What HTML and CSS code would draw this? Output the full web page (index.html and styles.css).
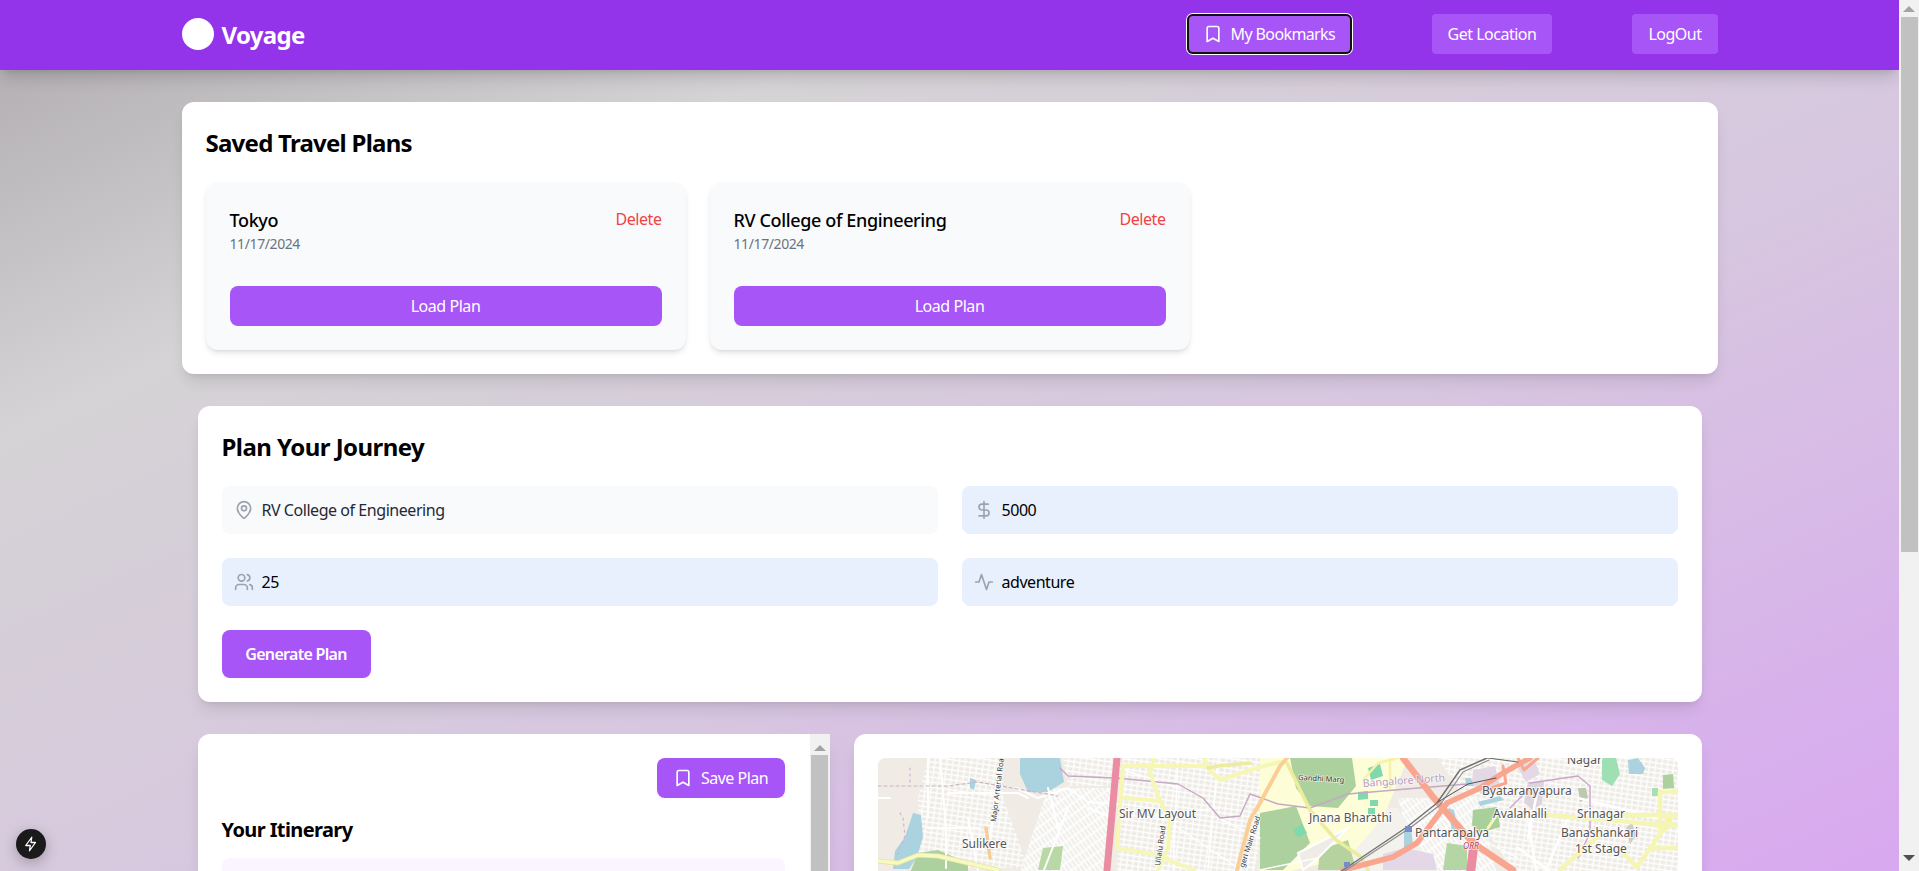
FILE: index.html
```html
<!DOCTYPE html>
<html lang="en">
<head>
<meta charset="utf-8">
<title>Voyage</title>
<link rel="stylesheet" href="styles.css">
</head>
<body>
<div class="window">
  <div class="page">
    <nav class="nav">
      <div class="nav-inner">
        <div class="brand"><span class="logo"></span><span class="brand-name">Voyage</span></div>
        <div class="nav-actions">
          <button class="nav-btn focused"><svg class="ic" viewBox="0 0 24 24"><path d="M19 21l-7-4-7 4V5a2 2 0 0 1 2-2h10a2 2 0 0 1 2 2z"/></svg>My Bookmarks</button>
          <button class="nav-btn">Get Location</button>
          <button class="nav-btn">LogOut</button>
        </div>
      </div>
    </nav>
    <main class="main">
      <section class="card saved">
        <h2 class="h-lg">Saved Travel Plans</h2>
        <div class="plans">
          <article class="plan">
            <div class="plan-head">
              <div><h3 class="plan-name">Tokyo</h3><p class="plan-date">11/17/2024</p></div>
              <span class="del">Delete</span>
            </div>
            <button class="load">Load Plan</button>
          </article>
          <article class="plan">
            <div class="plan-head">
              <div><h3 class="plan-name">RV College of Engineering</h3><p class="plan-date">11/17/2024</p></div>
              <span class="del">Delete</span>
            </div>
            <button class="load">Load Plan</button>
          </article>
        </div>
      </section>
      <div class="inner">
        <section class="card journey">
          <h2 class="h-lg h-journey">Plan Your Journey</h2>
          <div class="fields">
            <div class="field"><svg class="fi" viewBox="0 0 24 24"><path d="M20 10c0 5-5.500 10.200-7.400 11.800a1 1 0 0 1-1.200 0C9.500 20.200 4 15 4 10a8 8 0 0 1 16 0"/><circle cx="12" cy="10" r="3"/></svg><span class="val dim">RV College of Engineering</span></div>
            <div class="field auto"><svg class="fi" viewBox="0 0 24 24"><line x1="12" y1="2" x2="12" y2="22"/><path d="M17 5H9.500a3.500 3.500 0 0 0 0 7h5a3.500 3.500 0 0 1 0 7H6"/></svg><span class="val">5000</span></div>
            <div class="field auto"><svg class="fi" viewBox="0 0 24 24"><path d="M16 21v-2a4 4 0 0 0-4-4H6a4 4 0 0 0-4 4v2"/><circle cx="9" cy="7" r="4"/><path d="M22 21v-2a4 4 0 0 0-3-3.870"/><path d="M16 3.130a4 4 0 0 1 0 7.750"/></svg><span class="val">25</span></div>
            <div class="field auto"><svg class="fi" viewBox="0 0 24 24"><path d="M22 12h-4l-3 9L9 3l-3 9H2"/></svg><span class="val">adventure</span></div>
          </div>
          <button class="generate">Generate Plan</button>
        </section>
        <div class="split">
          <section class="itinerary">
            <div class="it-body">
              <div class="it-actions"><button class="save"><svg class="ic" viewBox="0 0 24 24"><path d="M19 21l-7-4-7 4V5a2 2 0 0 1 2-2h10a2 2 0 0 1 2 2z"/></svg>Save Plan</button></div>
              <h3 class="h-md">Your Itinerary</h3>
              <div class="it-box"></div>
            </div>
            <div class="sb sb-inner"><span class="arr up"></span><span class="thumb"></span></div>
          </section>
          <section class="map-card">
            <div class="map">
              <svg class="map-svg" viewBox="0 0 800 200" preserveAspectRatio="xMinYMin slice">
                <defs>
                  <pattern id="st1" width="6" height="5" patternUnits="userSpaceOnUse" patternTransform="rotate(8)">
                    <rect width="6" height="5" fill="#eeebe5"/>
                    <path d="M0 1.500H6M3 0V5" stroke="#fff" stroke-width="1.300"/>
                  </pattern>
                  <pattern id="st2" width="4" height="9" patternUnits="userSpaceOnUse" patternTransform="rotate(-35)">
                    <rect width="4" height="9" fill="#f1efeb"/>
                    <path d="M2 0V9M0 5H4" stroke="#fff" stroke-width="1.500"/>
                  </pattern>
                  <filter id="soft"><feGaussianBlur stdDeviation="0.350"/></filter>
                </defs>
                <g filter="url(#soft)">
                  <rect width="800" height="200" fill="#f0ece5"/>
                  <path d="M50 0H125V40L150 110H40V40Z" fill="url(#st1)"/>
                  <path d="M170 30H235L226 120H140Z" fill="url(#st2)"/>
                  <path d="M185 0H240L236 28H190Z" fill="url(#st1)"/>
                  <path d="M245 0H400L375 120H238Z" fill="url(#st1)"/>
                  <path d="M560 0H800V120H640Z" fill="url(#st1)"/>
                  <path d="M520 40H600L620 120H540Z" fill="url(#st2)"/>
                  <path d="M440 50H520L560 120H470Z" fill="#f4f2ec"/>
                  <path d="M382 0H530L505 60 470 100 382 120Z" fill="#fdfdd8"/>
                  <path d="M412 0H474L478 28 460 50 432 48 418 30Z" fill="#add19e"/>
                  <path d="M382 55L418 48 432 85 405 112H382Z" fill="#add19e"/>
                  <path d="M442 92L470 82 478 112H440Z" fill="#b5d29f"/>
                  <path d="M415 72l9-6 5 9-9 5Z" fill="#7fd9ad"/>
                  <path d="M480 34l10-1 0 8-10 1ZM492 42l8 0 0 6-8 0ZM490 50l7 0 0 7-7 0Z" fill="#7fd9ad"/>
                  <path d="M490 10l12-4 3 12-12 4Z" fill="#7fd9ad"/>
                  <path d="M420 95L470 70 440 100 425 112Z" fill="#eeece5" stroke="#fff" stroke-width="2"/>
                  <path d="M142 0H182L186 24 170 34 150 34 142 16Z" fill="#aad3df"/>
                  <path d="M92 20l6 2-2 10-4-2ZM35 55l8 2 2 22-6 20-8 12H15l2-18 10-14Z" fill="#aad3df"/>
                  <path d="M40 95L60 92 90 105 90 120H30Z" fill="#add19e"/>
                  <path d="M165 90L185 88 182 112 160 112Z" fill="#b8d9a6"/>
                  <path d="M569 85L589 88 589 112 565 112Z" fill="#b4d6a4"/>
                  <path d="M595 52l24-3 3 20-20 6-8-8Z" fill="#a9cf9a"/>
                  <path d="M595 12l22-4 6 24-20 4-9-12ZM640 10l16-8 6 14-14 8Z" fill="#e3d8e4"/>
                  <path d="M505 96l22-6 28 6 4 16h-54Z" fill="#e4d8e8"/>
                  <path d="M526 72l7-2 2 18-9 4Z" fill="#aad3df"/>
                  <path d="M570 50l6 2 4 20-6 2Z" fill="#aad3df"/>
                  <path d="M587 20l6 0 3 8-8 0Z" fill="#aad3df"/>
                  <path d="M600 44l22-6 4 4-24 6Z" fill="#aad3df"/>
                  <path d="M750 2l10-2 7 10-2 6-14 0Z" fill="#aad3df"/>
                  <path d="M724 0l14 0 4 16-8 12-10-6Z" fill="#9edfb4"/>
                  <path d="M785 17l10-1 1 14-11 1Z" fill="#add19e"/>
                  <path d="M774 30l6 0 1 8-7 0Z" fill="#a9dfb4"/>
                  <path d="M700 30l8 0 2 10-8 4Z" fill="#bdc9ae"/>
                  <path d="M650 24l16 0-2 22-10 6-8-8Z" fill="#ddd4de"/>
                  <path d="M748 70l6-6 4 14-6 8Z" fill="#cfcdc8"/>
                  <path d="M787 60l8-2-2 12-8 4Z" fill="#f7f4a8"/>
                  <g fill="none" stroke-linecap="round" stroke-linejoin="round">
                    <path d="M0 40H12M50 0V60M62 0L68 70V110M70 35H140L150 40M120 10L112 80M138 30L160 40 190 30 210 44 240 46M170 30L180 70M190 50L166 112M210 50L236 60M50 70H100M90 60L100 112" stroke="#fff" stroke-width="2"/>
                    <path d="M240 10L300 30M260 60L340 50M300 0L295 112M340 0L330 112M382 80L340 60M300 70L360 110M440 100L382 112" stroke="#fff" stroke-width="1.500"/>
                    <path d="M640 90L670 112M650 60L658 112M690 60L668 112M660 30L650 80M700 40L780 60" stroke="#fff" stroke-width="2.500"/>
                    <path d="M0 28H70L100 24 180 38" stroke="#c8b4c0" stroke-width="1.200" stroke-dasharray="3 3"/>
                    <path d="M22 55L25 60 27 78 18 100M32 10V24" stroke="#cdb4d2" stroke-width="1.200" stroke-dasharray="2 4"/>
                    <path d="M182 10L190 18 238 20 300 26 325 40 342 60 362 58 372 36 400 46 432 50 470 36 540 30 590 26" stroke="#c6a7c5" stroke-width="1.400"/>
                    <path d="M652 25L700 18 712 28 712 75 700 100M632 50L650 32" stroke="#c9a6ca" stroke-width="1.400"/>
                    <path d="M0 103L20 105 40 97 60 98 120 112" stroke="#e6e2a6" stroke-width="5"/>
                    <path d="M0 103L20 105 40 97 60 98 120 112" stroke="#f7fabf" stroke-width="3.500"/>
                    <path d="M245 8H328L342 22 382 9 402 4M245 8L239 90 275 96 316 112M246 40L282 43 292 60 290 90 280 112M276 0L272 15 282 43M326 0L330 8" stroke="#f7f7b5" stroke-width="4"/>
                    <path d="M409 5L432 52 458 82 482 98 490 112M330 10L340 8 372 5" stroke="#ecec9d" stroke-width="3.500"/>
                    <path d="M485 22L500 5 520 0M512 0V30" stroke="#f6f2a8" stroke-width="2.500"/>
                    <path d="M669 57L742 63 782 67H800M745 57H800M782 34V72M782 34H800M742 92L759 109M759 109L785 72M775 90H800M682 112L719 79" stroke="#f6f6b4" stroke-width="4.500"/>
                    <path d="M610 70L618 58" stroke="#f6f6b4" stroke-width="3"/>
                    <path d="M359 112L372 62 382 45 402 8 409 0" stroke="#f9cf97" stroke-width="4"/>
                    <path d="M239 0L229 112" stroke="#ea8ca2" stroke-width="7"/>
                    <path d="M596 85L592 120" stroke="#ea8ca2" stroke-width="9"/>
                    <path d="M525 0L555 39 595 85 635 112" stroke="#f8a68f" stroke-width="6.500"/>
                    <path d="M465 112L515 99 539 85 569 45 602 30 625 15 652 0" stroke="#f8a68f" stroke-width="5.500"/>
                    <path d="M625 8L628 25 608 32M640 0L646 12 660 0" stroke="#f8a68f" stroke-width="3"/>
                    <path d="M462 114L529 69 559 45 582 12 609 0" stroke="#6f6f6f" stroke-width="1.400"/>
                    <path d="M465 114L532 70 562 47 585 14 611 2" stroke="#8f8f8f" stroke-width="1.200"/>
                    <path d="M560 44L590 26 618 20" stroke="#555" stroke-width="1"/>
                    <path d="M610 0L640 4" stroke="#666" stroke-width="1.200"/>
                    <path d="M610 85L640 100" stroke="#fff" stroke-width="1.500" stroke-dasharray="3 2"/>
                    <path d="M108 70L112 100" stroke="#f6cd96" stroke-width="3.500" stroke-dasharray="4 3"/>
                  </g>
                  <path d="M527 68h7v6h-7z" fill="#7a8cc8"/>
                  <path d="M466 104h6v5h-6z" fill="#7a8cc8"/>
                </g>
                <g class="lbl">
                  <text x="84" y="90">Sulikere</text>
                  <text x="241" y="60">Sir MV Layout</text>
                  <text x="431" y="64">Jnana Bharathi</text>
                  <text x="537" y="79">Pantarapalya</text>
                  <text x="604" y="37">Byataranyapura</text>
                  <text x="615" y="60">Avalahalli</text>
                  <text x="699" y="60">Srinagar</text>
                  <text x="683" y="79">Banashankari</text>
                  <text x="697" y="95">1st Stage</text>
                  <text x="689" y="6">Nagar</text>
                </g>
                <g class="lbl-road">
                  <text x="420" y="22" transform="rotate(3 420 22)">Gandhi Marg</text>
                  <text transform="translate(118 64) rotate(-83)">Major Arterial Road</text>
                  <text transform="translate(282 108) rotate(-82)">Ullalu Road</text>
                  <text transform="translate(366 110) rotate(-72)">geri Main Road</text>
                </g>
                <text class="lbl-dist" x="485" y="29" transform="rotate(-4 485 29)">Bangalore North</text>
                <text class="lbl-orr" x="585" y="91">ORR</text>
              </svg>
            </div>
          </section>
        </div>
      </div>
    </main>
  </div>
  <div class="sb sb-page"><span class="arr up"></span><span class="thumb"></span><span class="arr down"></span></div>
</div>
<div class="badge"><svg viewBox="0 0 24 24"><path d="M13 3L5 14h6l-1 7 8-11h-6z"/></svg></div>
</body>
</html>
```
FILE: styles.css
```css
* { box-sizing: border-box; }
html, body { margin: 0; height: 871px; overflow: hidden; }
body { font-family: "Noto Sans", "Open Sans", sans-serif; font-size: 16px; color: #000; }
h2, h3, p { margin: 0; }
button { font: inherit; border: 0; cursor: pointer; }

.window { display: flex; height: 871px; }
.page {
  flex: 1; min-width: 0; height: 871px; overflow: hidden;
  background: linear-gradient(to bottom right, #aeaaae 0%, #d5d3d5 25%, #d7c6e0 60%, #d8a8f0 100%);
}
.sb { background: #f1f1f1; flex: 0 0 20px; width: 20px; display: flex; flex-direction: column; align-items: center; }
.sb-page { height: 871px; }
.thumb { display: block; width: 17px; background: #c1c1c1; }
.sb-page .thumb { height: 535px; margin-top: 5px; }
.sb-inner .thumb { flex: 1; margin-top: 4px; }
.sb-inner { padding-top: 5px; }
.arr { display: block; width: 0; height: 0; border-left: 6px solid transparent; border-right: 6px solid transparent; margin-top: 6px; }
.arr.up { border-bottom: 6px solid #a3a3a3; }
.arr.down { border-top: 6px solid #505050; margin-top: 303px; }

.nav { height: 70px; background: #9333ea; box-shadow: 0 10px 15px -3px rgba(0,0,0,.15), 0 4px 6px -4px rgba(0,0,0,.12); position: relative; }
.nav-inner { width: 1536px; height: 70px; margin: 0 auto; padding-bottom: 2px; display: flex; align-items: center; justify-content: space-between; }
.brand { display: flex; align-items: center; gap: 8px; }
.logo { width: 32px; height: 32px; border-radius: 50%; background: #fff; }
.brand-name { color: #fff; font-size: 24px; font-weight: 700; letter-spacing: -.7px; }
.nav-actions { display: flex; align-items: center; gap: 80px; }
.nav-btn { height: 40px; padding: 0 16px; background: #a855f7; color: #fff; border-radius: 4px; display: flex; align-items: center; gap: 8px; letter-spacing: -.5px; font-size: 16px; }
.nav-btn.focused { width: 165px; padding-right: 0; border-radius: 6px; box-shadow: inset 0 0 0 2px #111, 0 0 0 1px #fff; letter-spacing: -.62px; white-space: nowrap; }
.ic { width: 20px; height: 20px; flex: none; fill: none; stroke: #fff; stroke-width: 2; stroke-linecap: round; stroke-linejoin: round; }

.main { padding-top: 32px; width: 1536px; margin: 0 auto; }
.card { background: #fff; border-radius: 12px; box-shadow: 0 10px 15px -3px rgba(0,0,0,.1), 0 4px 6px -4px rgba(0,0,0,.1); padding: 24px; }
.saved { height: 272px; }
.h-lg { font-size: 24px; font-weight: 700; line-height: 34px; letter-spacing: -.75px; }
.h-journey { letter-spacing: -.55px; }
.plans { display: grid; grid-template-columns: repeat(3, 1fr); gap: 24px; margin-top: 22px; }
.plan { background: #f9fafb; border-radius: 12px; height: 168px; padding: 24px; box-shadow: 0 4px 6px -1px rgba(0,0,0,.1), 0 2px 4px -2px rgba(0,0,0,.1); }
.plan-head { display: flex; justify-content: space-between; align-items: flex-start; height: 60px; }
.plan-name { font-size: 18px; font-weight: 500; line-height: 28px; letter-spacing: -.36px; }
.plan-date { font-size: 14px; line-height: 20px; color: #6b7280; letter-spacing: -.4px; }
.del { color: #ef4444; line-height: 26px; letter-spacing: -.45px; }
.load { display: block; width: 100%; height: 40px; margin-top: 20px; background: #a855f7; color: #fff; border-radius: 8px; letter-spacing: -.45px; }

.inner { width: 1504px; margin: 32px auto 0; }
.journey { height: 296px; }
.fields { display: grid; grid-template-columns: 1fr 1fr; gap: 24px; margin-top: 22px; }
.field { height: 48px; background: #f9fafb; border-radius: 8px; display: flex; align-items: center; padding-left: 12px; gap: 8px; }
.field.auto { background: #e8f0fe; }
.fi { width: 20px; height: 20px; flex: none; fill: none; stroke: #9ca3af; stroke-width: 2; stroke-linecap: round; stroke-linejoin: round; }
.val { letter-spacing: -.45px; }
.val.dim { color: #1f2937; }
.generate { display: block; width: 149px; height: 48px; margin-top: 24px; background: #a855f7; color: #fff; font-weight: 600; border-radius: 8px; letter-spacing: -.7px; font-size: 16px; }

.split { display: grid; grid-template-columns: 632px 848px; gap: 24px; margin-top: 32px; }
.itinerary { background: #fff; border-radius: 12px 0 0 12px; height: 500px; display: flex; overflow: hidden; box-shadow: 0 10px 15px -3px rgba(0,0,0,.1); }
.it-body { flex: 1; padding: 24px 25px 0 24px; }
.it-actions { display: flex; justify-content: flex-end; }
.save { height: 40px; width: 128px; background: #a855f7; color: #fff; border-radius: 8px; display: flex; align-items: center; justify-content: center; gap: 8px; letter-spacing: -.5px; }
.h-md { font-size: 20px; font-weight: 700; line-height: 28px; margin-top: 18px; letter-spacing: -.6px; }
.it-box { background: #faf5ff; border-radius: 8px; height: 300px; margin-top: 14px; }
.map-card { background: #fff; border-radius: 12px; height: 500px; padding: 24px; box-shadow: 0 10px 15px -3px rgba(0,0,0,.1); }
.map { height: 400px; border-radius: 8px; overflow: hidden; background: #f0ece5; }
.map-svg { display: block; width: 800px; height: 200px; }
.lbl text { font: 400 12px "Noto Sans", sans-serif; fill: #555; paint-order: stroke; stroke: rgba(255,255,255,.75); stroke-width: 2px; }
.lbl-road text { font: 400 7.5px "Noto Sans", sans-serif; fill: #333; paint-order: stroke; stroke: rgba(255,255,255,.6); stroke-width: 1.500px; }
.lbl-dist { font: 400 10.5px "Noto Sans", sans-serif; fill: #b99bc4; paint-order: stroke; stroke: rgba(255,255,255,.6); stroke-width: 1.500px; }
.lbl-orr { font: italic 400 8.5px "Noto Sans", sans-serif; fill: #c0354f; paint-order: stroke; stroke: rgba(255,255,255,.7); stroke-width: 1.500px; }

.badge { position: fixed; left: 16px; top: 829px; width: 30px; height: 30px; border-radius: 50%; background: #1a1a1a; box-shadow: 0 4px 14px rgba(0,0,0,.25); display: flex; align-items: center; justify-content: center; }
.badge svg { width: 18px; height: 18px; fill: none; stroke: #fff; stroke-width: 1.700; stroke-linejoin: round; }
```
